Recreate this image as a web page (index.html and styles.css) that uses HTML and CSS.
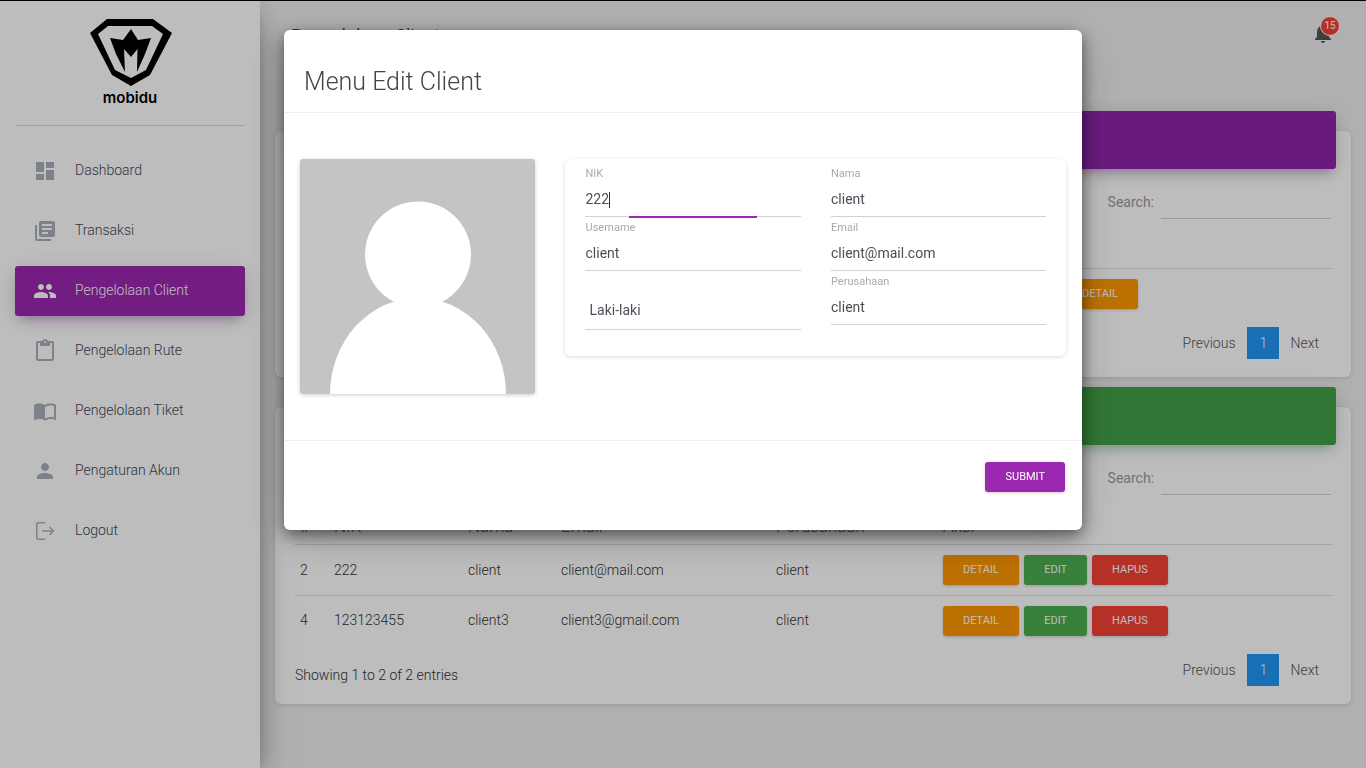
FILE: index.html
```html
<!DOCTYPE html>
<html lang="en">
<head>
    <meta charset="UTF-8">
    <meta name="viewport" content="width=device-width, initial-scale=1.0">
    <title>Pengelolaan Client</title>
    <link rel="stylesheet" href="styles.css">
</head>
<body>
    <div class="page">
        <aside class="sidebar">
            <div class="logo">
                <svg class="logo-mark" viewBox="0 0 82 67">
                    <path fill-rule="evenodd" d="M17 0H63L82 14 60 56 41 67 22 56 0 14ZM18 7 8 15 25 51 41 59 56 51 73 15 62 7Z"/>
                    <path d="M20 19 33 21 41 10 48 21 61 19 55 35 47 53 47.5 30 41 38 34 30 35 53 26 35Z"/>
                </svg>
                <span class="logo-text">mobidu</span>
            </div>
            <nav class="menu">
                <a class="menu-item">
                    <svg class="menu-icon" viewBox="0 0 24 24"><path d="M3 13h8V3H3v10zm0 8h8v-6H3v6zm10 0h8V11h-8v10zm0-18v6h8V3h-8z"/></svg>
                    <span>Dashboard</span>
                </a>
                <a class="menu-item">
                    <svg class="menu-icon" viewBox="0 0 24 24"><path d="M4 6H2v14c0 1.1.9 2 2 2h14v-2H4V6zm16-4H8c-1.1 0-2 .9-2 2v12c0 1.1.9 2 2 2h12c1.1 0 2-.9 2-2V4c0-1.1-.9-2-2-2zm-1 9H9V9h10v2zm-4 4H9v-2h6v2zm4-8H9V5h10v2z"/></svg>
                    <span>Transaksi</span>
                </a>
                <a class="menu-item active">
                    <svg class="menu-icon" viewBox="0 0 24 24"><path d="M16 11c1.66 0 2.99-1.34 2.99-3S17.66 5 16 5c-1.66 0-3 1.34-3 3s1.34 3 3 3zm-8 0c1.66 0 2.99-1.34 2.99-3S9.66 5 8 5C6.34 5 5 6.34 5 8s1.34 3 3 3zm0 2c-2.33 0-7 1.17-7 3.5V19h14v-2.5c0-2.33-4.67-3.5-7-3.5zm8 0c-.29 0-.62.02-.97.05 1.16.84 1.97 1.97 1.97 3.45V19h6v-2.5c0-2.33-4.67-3.5-7-3.5z"/></svg>
                    <span>Pengelolaan Client</span>
                </a>
                <a class="menu-item">
                    <svg class="menu-icon" viewBox="0 0 24 24"><path d="M19 2h-4.18C14.4.84 13.3 0 12 0c-1.3 0-2.4.84-2.82 2H5c-1.1 0-2 .9-2 2v16c0 1.1.9 2 2 2h14c1.1 0 2-.9 2-2V4c0-1.1-.9-2-2-2zm-7 0c.55 0 1 .45 1 1s-.45 1-1 1-1-.45-1-1 .45-1 1-1zm7 18H5V4h2v3h10V4h2v16z"/></svg>
                    <span>Pengelolaan Rute</span>
                </a>
                <a class="menu-item">
                    <svg class="menu-icon" viewBox="0 0 24 24"><path d="M21 5c-1.11-.35-2.33-.5-3.5-.5-1.95 0-4.05.4-5.5 1.5-1.45-1.1-3.55-1.5-5.5-1.5S2.45 4.9 1 6v14.65c0 .25.25.5.5.5.1 0 .15-.05.25-.05C3.1 20.45 5.05 20 6.5 20c1.95 0 4.05.4 5.5 1.5 1.35-.85 3.8-1.5 5.5-1.5 1.65 0 3.35.3 4.75 1.05.1.05.15.05.25.05.25 0 .5-.25.5-.5V6c-.6-.45-1.25-.75-2-1zm0 13.5c-1.1-.35-2.3-.5-3.5-.5-1.7 0-4.15.65-5.5 1.5V8c1.35-.85 3.8-1.5 5.5-1.5 1.2 0 2.4.15 3.5.5v11.5z"/></svg>
                    <span>Pengelolaan Tiket</span>
                </a>
                <a class="menu-item">
                    <svg class="menu-icon" viewBox="0 0 24 24"><path d="M12 12c2.21 0 4-1.79 4-4s-1.79-4-4-4-4 1.79-4 4 1.79 4 4 4zm0 2c-2.67 0-8 1.34-8 4v2h16v-2c0-2.66-5.33-4-8-4z"/></svg>
                    <span>Pengaturan Akun</span>
                </a>
                <a class="menu-item">
                    <svg class="menu-icon" viewBox="0 0 24 24"><path d="M3 5c0-1.1.9-2 2-2h7v1.5H4.5v15H12V21H5c-1.1 0-2-.9-2-2V5zM17 7.5l-1 1 2.7 2.75H9v1.5h9.7L16 15.5l1 1 4.5-4.5z"/></svg>
                    <span>Logout</span>
                </a>
            </nav>
        </aside>

        <main class="main">
            <header class="topbar">
                <h2 class="page-title">Pengelolaan Client</h2>
                <div class="notif">
                    <svg class="notif-icon" viewBox="0 0 24 24"><path d="M12 22c1.1 0 2-.9 2-2h-4c0 1.1.89 2 2 2zm6-6v-5c0-3.07-1.64-5.64-4.5-6.32V4c0-.83-.67-1.5-1.5-1.5s-1.5.67-1.5 1.5v.68C7.63 5.36 6 7.92 6 11v5l-2 2v1h16v-1l-2-2z"/></svg>
                    <span class="notif-badge">15</span>
                </div>
            </header>

            <section class="card">
                <div class="card-header purple"></div>
                <div class="card-body">
                    <div class="search-row">
                        <label class="search-label">Search:</label>
                        <div class="search-input"></div>
                    </div>
                    <table class="table">
                        <colgroup><col class="col-first"><col></colgroup>
                        <thead>
                            <tr><th></th><th></th></tr>
                        </thead>
                        <tbody>
                            <tr>
                                <td></td>
                                <td><a class="btn orange">Detail</a></td>
                            </tr>
                        </tbody>
                    </table>
                    <div class="table-foot">
                        <span class="table-info"></span>
                        <div class="pager">
                            <a class="pager-link">Previous</a>
                            <a class="pager-num">1</a>
                            <a class="pager-link">Next</a>
                        </div>
                    </div>
                </div>
            </section>

            <section class="card">
                <div class="card-header green"></div>
                <div class="card-body">
                    <div class="search-row">
                        <label class="search-label">Search:</label>
                        <div class="search-input"></div>
                    </div>
                    <table class="table">
                        <colgroup>
                            <col class="col-no">
                            <col class="col-nik">
                            <col class="col-nama">
                            <col class="col-email">
                            <col class="col-perusahaan">
                            <col>
                        </colgroup>
                        <thead>
                            <tr>
                                <th>#</th>
                                <th>NIK</th>
                                <th>Nama</th>
                                <th>Email</th>
                                <th>Perusahaan</th>
                                <th>Aksi</th>
                            </tr>
                        </thead>
                        <tbody>
                            <tr>
                                <td>2</td>
                                <td>222</td>
                                <td>client</td>
                                <td>client@mail.com</td>
                                <td>client</td>
                                <td class="actions">
                                    <a class="btn orange">Detail</a>
                                    <a class="btn green-btn">Edit</a>
                                    <a class="btn red">Hapus</a>
                                </td>
                            </tr>
                            <tr>
                                <td>4</td>
                                <td>123123455</td>
                                <td>client3</td>
                                <td>client3@gmail.com</td>
                                <td>client</td>
                                <td class="actions">
                                    <a class="btn orange">Detail</a>
                                    <a class="btn green-btn">Edit</a>
                                    <a class="btn red">Hapus</a>
                                </td>
                            </tr>
                        </tbody>
                    </table>
                    <div class="table-foot">
                        <span class="table-info">Showing 1 to 2 of 2 entries</span>
                        <div class="pager">
                            <a class="pager-link">Previous</a>
                            <a class="pager-num">1</a>
                            <a class="pager-link">Next</a>
                        </div>
                    </div>
                </div>
            </section>
        </main>
    </div>

    <div class="backdrop">
        <div class="modal">
            <div class="modal-header">
                <h4 class="modal-title">Menu Edit Client</h4>
            </div>
            <div class="modal-body">
                <div class="avatar">
                    <svg viewBox="0 0 235 235">
                        <circle cx="118" cy="95.5" r="53"/>
                        <ellipse cx="118" cy="235" rx="88" ry="96"/>
                    </svg>
                </div>
                <div class="form-card">
                    <div class="form-col">
                        <div class="field">
                            <label class="field-label">NIK</label>
                            <div class="field-value">222<span class="caret"></span></div>
                            <span class="focus-bar"></span>
                        </div>
                        <div class="field">
                            <label class="field-label">Username</label>
                            <div class="field-value">client</div>
                        </div>
                        <div class="field select-field">
                            <div class="field-value">Laki-laki</div>
                        </div>
                    </div>
                    <div class="form-col">
                        <div class="field">
                            <label class="field-label">Nama</label>
                            <div class="field-value">client</div>
                        </div>
                        <div class="field">
                            <label class="field-label">Email</label>
                            <div class="field-value">client@mail.com</div>
                        </div>
                        <div class="field">
                            <label class="field-label">Perusahaan</label>
                            <div class="field-value">client</div>
                        </div>
                    </div>
                </div>
            </div>
            <div class="modal-footer">
                <a class="btn submit">Submit</a>
            </div>
        </div>
    </div>
</body>
</html>
```

FILE: styles.css
```css
* {
    box-sizing: border-box;
}

body {
    font-family: Roboto, "Liberation Sans", sans-serif;
    font-size: 14px;
    color: #3c4858;
    background-color: #eee;
    margin: 0;
    overflow: hidden;
}

.page {
    display: flex;
    height: 768px;
    border-top: 1px solid #000;
}

/* sidebar */
.sidebar {
    width: 260px;
    flex-shrink: 0;
    background-color: #fff;
    position: relative;
    z-index: 2;
    box-shadow: 0 16px 38px -12px rgba(0, 0, 0, 0.56), 0 4px 25px 0 rgba(0, 0, 0, 0.12), 0 8px 10px -5px rgba(0, 0, 0, 0.2);
}

.logo {
    height: 125px;
    margin: 0 15px;
    padding-top: 18px;
    border-bottom: 1px solid rgba(180, 180, 180, 0.5);
    display: flex;
    flex-direction: column;
    align-items: center;
}

.logo-mark {
    width: 82px;
    height: 67px;
    display: block;
    margin-left: 1px;
}

.logo-text {
    font-family: Inter, sans-serif;
    font-weight: 600;
    font-size: 15px;
    line-height: 16px;
    margin-top: 4px;
    color: #000;
}

.menu {
    padding-top: 20px;
}

.menu-item {
    display: flex;
    align-items: center;
    height: 50px;
    margin: 0 15px 10px;
    padding-left: 18px;
    gap: 18px;
    border-radius: 3px;
    color: #3c4858;
    font-weight: 300;
}

.menu-item span {
    margin-bottom: 2px;
}

.menu-icon {
    width: 24px;
    height: 24px;
    fill: #a9afbb;
    flex-shrink: 0;
}

.menu-item.active {
    background-color: #9c27b0;
    color: #fff;
    box-shadow: 0 4px 20px 0 rgba(0, 0, 0, 0.14), 0 7px 10px -5px rgba(156, 39, 176, 0.4);
}

.menu-item.active .menu-icon {
    fill: #fff;
}

/* main panel */
.main {
    flex: 1;
    min-width: 0;
    padding: 0 15px;
}

.topbar {
    height: 130px;
    display: flex;
    justify-content: space-between;
    padding: 25px 16px 0 17px;
}

.page-title {
    font-size: 18px;
    font-weight: 400;
    line-height: 20px;
    margin: 0 0 0 -1px;
}

.notif {
    position: relative;
    width: 24px;
    height: 24px;
    margin-top: -5px;
}

.notif-icon {
    width: 24px;
    height: 24px;
    fill: #555;
}

.notif-badge {
    position: absolute;
    top: -5px;
    left: 9px;
    width: 20px;
    height: 20px;
    border-radius: 50%;
    border: 1px solid #fff;
    background-color: #f44336;
    color: #fff;
    font-size: 10px;
    line-height: 18px;
    text-align: center;
}

.card {
    background-color: #fff;
    border-radius: 6px;
    box-shadow: 0 1px 4px 0 rgba(0, 0, 0, 0.14);
    margin-bottom: 30px;
}

.card-header {
    height: 58px;
    margin: 0 15px -20px;
    position: relative;
    top: -20px;
    border-radius: 3px;
}

.card-header.purple {
    background: linear-gradient(60deg, #ab47bc, #8e24aa 70%);
    box-shadow: 0 4px 20px 0 rgba(0, 0, 0, 0.14), 0 7px 10px -5px rgba(156, 39, 176, 0.4);
}

.card-header.green {
    background: linear-gradient(60deg, #66bb6a, #43a047 70%);
    box-shadow: 0 4px 20px 0 rgba(0, 0, 0, 0.14), 0 7px 10px -5px rgba(76, 175, 80, 0.4);
}

.card-body {
    padding: 0 18px 18px 20px;
}

.search-row {
    height: 50px;
    display: flex;
    justify-content: flex-end;
    align-items: flex-end;
    padding-right: 2px;
}

.search-label {
    color: #999;
    line-height: 32px;
    margin: 0 7px 1px 0;
}

.search-input {
    width: 170px;
    height: 32px;
    border-bottom: 1px solid #d2d2d2;
}

.table {
    width: 100%;
    border-collapse: collapse;
    table-layout: fixed;
    font-weight: 300;
    color: #333;
}

.col-first { width: 762px; }
.col-no { width: 34px; }
.col-nik { width: 134px; }
.col-nama { width: 93px; }
.col-email { width: 215px; }
.col-perusahaan { width: 167px; }

.table th {
    height: 49px;
    padding: 0 4px 8px 5px;
    vertical-align: bottom;
    text-align: left;
    font-size: 17px;
    font-weight: 300;
    line-height: 19px;
    color: #9c27b0;
    border-bottom: 1px solid #ddd;
}

.table td {
    height: 51px;
    padding: 0 5px;
    border-top: 1px solid #ddd;
}

.table tbody tr:first-child td {
    border-top: none;
}

.table tbody tr + tr td:not(.actions) {
    padding-bottom: 1px;
}

.table .actions {
    white-space: nowrap;
}

.btn {
    display: inline-block;
    height: 30px;
    line-height: 29px;
    padding: 0 20px;
    border-radius: 3px;
    font-size: 11px;
    font-weight: 400;
    text-transform: uppercase;
    color: #fff;
    margin-right: 2px;
    box-shadow: 0 1px 3px 0 rgba(0, 0, 0, 0.2);
}

.btn.orange { background-color: #ff9800; }
.btn.green-btn { background-color: #4caf50; margin-right: 1px; }
.btn.red { background-color: #f44336; padding: 0 20.5px; }
.btn.submit { background-color: #9c27b0; margin-right: 0; line-height: 30px; }

.table-foot {
    display: flex;
    justify-content: space-between;
    align-items: center;
    margin-top: 8px;
    height: 32px;
    padding-right: 1px;
}

.table-info {
    font-weight: 300;
    color: #333;
    padding-top: 10px;
}

.pager {
    display: flex;
    align-items: center;
}

.pager-link {
    padding: 0 12px;
    font-weight: 300;
    color: #555;
    line-height: 32px;
}

.pager-link:last-child {
    padding: 0 13px 0 11px;
}

.pager-num {
    width: 32px;
    height: 32px;
    line-height: 32px;
    text-align: center;
    font-weight: 300;
    color: #fff;
    background-color: #2196f3;
}

/* modal */
.backdrop {
    position: fixed;
    top: 0;
    left: 0;
    width: 100%;
    height: 100%;
    z-index: 10;
    background-color: rgba(0, 0, 0, 0.26);
    display: flex;
    justify-content: center;
    padding-top: 30px;
}

.modal {
    width: 798px;
    height: 500px;
    background-color: #fff;
    border-radius: 6px;
    display: flex;
    flex-direction: column;
    box-shadow: 0 5px 15px rgba(0, 0, 0, 0.5), 0 10px 40px rgba(0, 0, 0, 0.2);
}

.modal-header {
    height: 83px;
    padding: 0 20px;
    display: flex;
    align-items: flex-end;
    border-bottom: 1px solid #eee;
}

.modal-title {
    margin: 0 0 15px;
    font-size: 25px;
    font-weight: 300;
    line-height: 30px;
    color: #444;
}

.modal-body {
    flex: 1;
    padding: 46px 16px 0;
    display: flex;
    gap: 30px;
    align-items: flex-start;
}

.avatar {
    width: 235px;
    height: 235px;
    background-color: #c4c4c4;
    border-radius: 3px;
    overflow: hidden;
    box-shadow: 0 1px 4px 0 rgba(0, 0, 0, 0.2);
}

.avatar svg {
    display: block;
    fill: #fff;
}

.form-card {
    width: 501px;
    padding: 8px 20px 22px;
    display: flex;
    gap: 30px;
    border-radius: 6px;
    box-shadow: 0 1px 4px 0 rgba(0, 0, 0, 0.14);
}

.form-col {
    flex: 1;
}

.field {
    position: relative;
    margin-bottom: 4px;
    border-bottom: 1px solid #d2d2d2;
}

.field-label {
    display: block;
    font-size: 11px;
    line-height: 14px;
    color: #aaa;
    padding-left: 0.5px;
}

.field-value {
    height: 35px;
    line-height: 36px;
    color: #495057;
    padding-left: 0.5px;
}

.select-field {
    padding: 17px 0 0 4px;
}

.select-field .field-value {
    height: 37px;
}

.caret {
    display: inline-block;
    width: 1px;
    height: 16px;
    background-color: #333;
    vertical-align: middle;
}

.focus-bar {
    position: absolute;
    left: 44px;
    bottom: -2px;
    width: 128px;
    height: 2px;
    background-color: #9c27b0;
}

.modal-footer {
    height: 90px;
    padding: 21px 17px 0 0;
    display: flex;
    justify-content: flex-end;
    align-items: flex-start;
    border-top: 1px solid #eee;
}
```
